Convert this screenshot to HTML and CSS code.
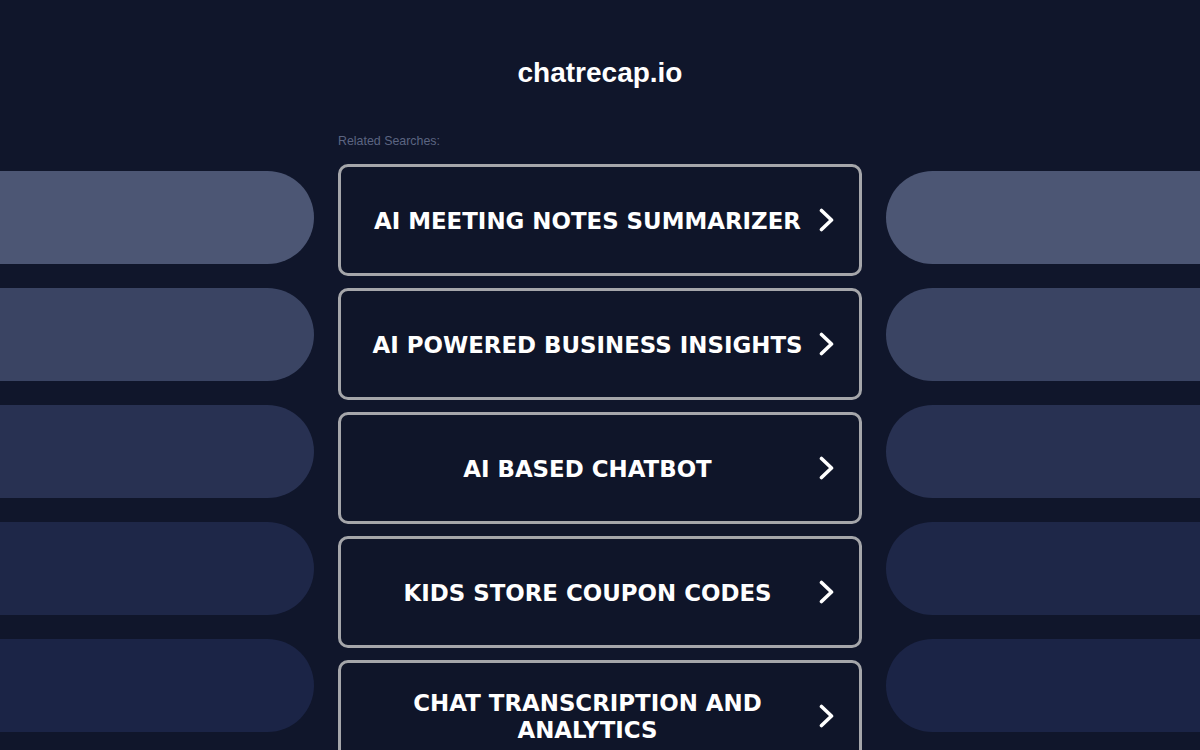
FILE: index.html
```html
<!DOCTYPE html>
<html lang="en">
<head>
<meta charset="utf-8">
<title>chatrecap.io</title>
<link rel="stylesheet" href="styles.css">
</head>
<body>
<header class="header">
  <h1 class="domain">chatrecap.io</h1>
</header>
<main class="layout">
  <div class="bars bars-left">
    <div class="bar b1"></div>
    <div class="bar b2"></div>
    <div class="bar b3"></div>
    <div class="bar b4"></div>
    <div class="bar b5"></div>
  </div>
  <section class="center">
    <div class="label">Related Searches:</div>
    <div class="links">
      <a class="link" href="#"><span class="link-text">AI MEETING NOTES SUMMARIZER</span><svg class="chev" viewBox="0 0 15 24"><polyline points="2.5,2.5 12.5,12 2.5,21.5"/></svg></a>
      <a class="link" href="#"><span class="link-text">AI POWERED BUSINESS INSIGHTS</span><svg class="chev" viewBox="0 0 15 24"><polyline points="2.5,2.5 12.5,12 2.5,21.5"/></svg></a>
      <a class="link" href="#"><span class="link-text">AI BASED CHATBOT</span><svg class="chev" viewBox="0 0 15 24"><polyline points="2.5,2.5 12.5,12 2.5,21.5"/></svg></a>
      <a class="link" href="#"><span class="link-text">KIDS STORE COUPON CODES</span><svg class="chev" viewBox="0 0 15 24"><polyline points="2.5,2.5 12.5,12 2.5,21.5"/></svg></a>
      <a class="link" href="#"><span class="link-text">CHAT TRANSCRIPTION AND ANALYTICS</span><svg class="chev" viewBox="0 0 15 24"><polyline points="2.5,2.5 12.5,12 2.5,21.5"/></svg></a>
    </div>
  </section>
  <div class="bars bars-right">
    <div class="bar b1"></div>
    <div class="bar b2"></div>
    <div class="bar b3"></div>
    <div class="bar b4"></div>
    <div class="bar b5"></div>
  </div>
</main>
</body>
</html>
```

FILE: styles.css
```css
html, body {
  margin: 0;
  padding: 0;
  overflow: hidden;
}
body {
  background: #10162b;
  width: 1200px;
  height: 750px;
}
.header {
  height: 130px;
  padding-top: 57px;
  box-sizing: border-box;
  text-align: center;
}
.domain {
  margin: 0;
  font-family: "Liberation Sans", Arial, sans-serif;
  font-weight: bold;
  font-size: 28px;
  line-height: 32px;
  color: #ffffff;
}
.layout {
  display: grid;
  grid-template-columns: 1fr 524px 1fr;
  column-gap: 24px;
}
.bars {
  display: flex;
  flex-direction: column;
  gap: 24px;
  padding-top: 41px;
}
.bar {
  height: 93px;
}
.bars-left .bar {
  border-radius: 0 47px 47px 0;
}
.bars-right .bar {
  border-radius: 47px 0 0 47px;
}
.b1 { background: #4c5674; }
.b2 { background: #3a4463; }
.b3 { background: #283152; }
.b4 { background: #1e2748; }
.b5 { background: #1b2446; }

.label {
  font-family: "Liberation Sans", Arial, sans-serif;
  font-size: 12.4px;
  line-height: 20px;
  height: 20px;
  margin-top: 1px;
  color: #5c6582;
}
.links {
  margin-top: 13px;
  display: flex;
  flex-direction: column;
  gap: 12px;
}
.link {
  box-sizing: border-box;
  height: 112px;
  border: 3px solid #a5a6aa;
  border-radius: 10px;
  background: #0f1529;
  display: flex;
  align-items: center;
  padding: 0 25px;
  gap: 10px;
  text-decoration: none;
  color: #ffffff;
}
.link-text {
  flex: 1;
  text-align: center;
  font-family: "DejaVu Sans", Verdana, sans-serif;
  font-weight: bold;
  font-size: 22.9px;
  line-height: 27px;
  padding-top: 2px;
  color: #ffffff;
}
.chev {
  width: 15px;
  height: 24px;
  flex: none;
}
.chev polyline {
  fill: none;
  stroke: #ffffff;
  stroke-width: 3.6;
  stroke-linecap: round;
  stroke-linejoin: round;
}
```
